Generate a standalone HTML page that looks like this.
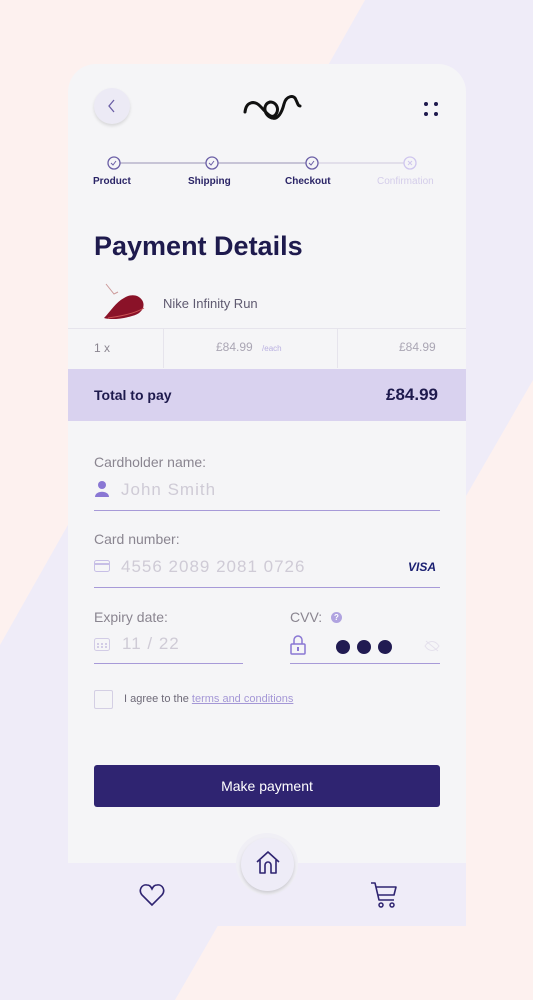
<!DOCTYPE html>
<html><head><meta charset="utf-8"><style>
*{margin:0;padding:0;box-sizing:border-box}
body{width:533px;height:1000px;position:relative;overflow:hidden;background:#fdf1ef;font-family:"Liberation Sans",sans-serif}
.bg{position:absolute;left:0;top:0}
.card{position:absolute;left:68px;top:64px;width:398px;height:862px;background:#f5f5f7;border-radius:28px 28px 0 0;overflow:hidden}
.t{position:absolute;white-space:nowrap}
.lbl{color:#8a8590;font-size:14px}
.ph{color:#cfcbd6;font-size:17px;letter-spacing:1px}
.line{position:absolute;height:1px;background:#a79ad8}
</style></head><body>
<svg class="bg" width="533" height="1000"><polygon points="365,0 533,0 533,380 175,1000 0,1000 0,645" fill="#efecf8"/></svg>
<div class="card">
 <div style="position:absolute;left:26px;top:24px;width:36px;height:36px;border-radius:50%;background:#eceaf5;box-shadow:0 2px 3px rgba(0,0,0,.12)"></div>
 <svg style="position:absolute;left:38px;top:33px" width="12" height="18"><path d="M8 3 L3 9 L8 15" stroke="#6b5fa6" stroke-width="1.3" fill="none"/></svg>
 <svg style="position:absolute;left:174px;top:26px" width="62" height="34"><path d="M3 22 C4 12 12 10 18 16 C24 22 28 28 32 26 C38 22 36 12 28 12 C20 14 22 26 30 28 C36 30 40 22 42 14 C44 6 52 4 54 10 C56 14 56 16 58 16" stroke="#111" stroke-width="3" fill="none" stroke-linecap="round"/></svg>
 <svg style="position:absolute;left:354px;top:36px" width="20" height="20" fill="#1e1a4d"><circle cx="4" cy="4" r="2"/><circle cx="14" cy="4" r="2"/><circle cx="4" cy="14" r="2"/><circle cx="14" cy="14" r="2"/></svg>
 <svg style="position:absolute;left:0;top:90px" width="398" height="20">
  <line x1="52" y1="9" x2="240" y2="9" stroke="#b8b3cc" stroke-width="1.5"/><line x1="250" y1="9" x2="336" y2="9" stroke="#dcd8e6" stroke-width="1.5"/>
  <g fill="#f5f5f7" stroke="#6b5fa6" stroke-width="1.3"><circle cx="46" cy="9" r="6"/><circle cx="144" cy="9" r="6"/><circle cx="244" cy="9" r="6"/></g>
  <circle cx="342" cy="9" r="6" fill="#f5f5f7" stroke="#cfc6ee" stroke-width="1.3"/>
  <g stroke="#6b5fa6" fill="none" stroke-width="1"><path d="M43 9l2 2 3-4"/><path d="M141 9l2 2 3-4"/><path d="M241 9l2 2 3-4"/></g>
  <path d="M340 7l4 4M344 7l-4 4" stroke="#cfc6ee"/>
 </svg>
 <div class="t" style="left:25px;top:112px;font-size:10px;font-weight:bold;color:#2a2466">Product</div>
 <div class="t" style="left:120px;top:112px;font-size:10px;font-weight:bold;color:#2a2466">Shipping</div>
 <div class="t" style="left:217px;top:112px;font-size:10px;font-weight:bold;color:#2a2466">Checkout</div>
 <div class="t" style="left:309px;top:112px;font-size:10px;color:#d4cdea">Confirmation</div>
 <div class="t" style="left:26px;top:167px;font-size:27px;font-weight:bold;color:#1e1a4d">Payment Details</div>
 <svg style="position:absolute;left:34px;top:218px" width="48" height="42"><path d="M4 2 L12 12 L16 10" stroke="#c99" fill="none"/><path d="M2 36 C8 30 14 20 22 16 C28 12 36 12 40 18 C44 24 40 32 30 34 C20 37 8 38 2 36Z" fill="#8a1228"/><path d="M6 36 C18 34 32 32 42 26" stroke="#c55" fill="none" stroke-width="1"/></svg>
 <div class="t" style="left:95px;top:232px;font-size:13px;color:#5f5a70">Nike Infinity Run</div>
 <div style="position:absolute;left:0;top:264px;width:398px;height:1px;background:#e6e4ec"></div>
 <div style="position:absolute;left:95px;top:264px;width:1px;height:40px;background:#e6e4ec"></div>
 <div style="position:absolute;left:269px;top:264px;width:1px;height:40px;background:#e6e4ec"></div>
 <div class="t" style="left:26px;top:277px;font-size:12px;color:#8a8590">1 x</div>
 <div class="t" style="left:148px;top:276px;font-size:12px;color:#aaa6b4">£84.99 <span style="font-size:8px;color:#b9b0e0;margin-left:6px">/each</span></div>
 <div class="t" style="left:331px;top:276px;font-size:12px;color:#aaa6b4">£84.99</div>
 <div style="position:absolute;left:0;top:305px;width:398px;height:52px;background:#d9d2ef"></div>
 <div class="t" style="left:26px;top:323px;font-size:14px;font-weight:bold;color:#1e1a4d">Total to pay</div>
 <div class="t" style="left:318px;top:321px;font-size:17px;font-weight:bold;color:#1e1a4d">£84.99</div>
 <div class="t lbl" style="left:26px;top:390px">Cardholder name:</div>
 <svg style="position:absolute;left:27px;top:417px" width="14" height="16" fill="#8a77d4"><circle cx="7" cy="4" r="4"/><path d="M0 16 C0 9 14 9 14 16Z"/></svg>
 <div class="t ph" style="left:53px;top:416px">John Smith</div>
 <div class="line" style="left:26px;top:446px;width:346px"></div>
 <div class="t lbl" style="left:26px;top:467px">Card number:</div>
 <svg style="position:absolute;left:26px;top:496px" width="16" height="12"><rect x="0.5" y="0.5" width="15" height="11" rx="2" fill="none" stroke="#c7bfe6"/><line x1="1" y1="4" x2="15" y2="4" stroke="#c7bfe6" stroke-width="2"/></svg>
 <div class="t ph" style="left:53px;top:493px">4556 2089 2081 0726</div>
 <div class="t" style="left:340px;top:496px;font-size:12px;font-weight:bold;font-style:italic;color:#1a1f71">VISA</div>
 <div class="line" style="left:26px;top:523px;width:346px"></div>
 <div class="t lbl" style="left:26px;top:545px">Expiry date:</div>
 <svg style="position:absolute;left:26px;top:572px" width="16" height="15"><rect x="0.5" y="2.5" width="15" height="12" rx="2" fill="none" stroke="#d2cce6"/><g fill="#d2cce6"><rect x="3" y="7" width="2" height="2"/><rect x="7" y="7" width="2" height="2"/><rect x="11" y="7" width="2" height="2"/><rect x="3" y="10" width="2" height="2"/><rect x="7" y="10" width="2" height="2"/><rect x="11" y="10" width="2" height="2"/></g></svg>
 <div class="t ph" style="left:54px;top:570px">11 / 22</div>
 <div class="line" style="left:26px;top:599px;width:149px"></div>
 <div class="t lbl" style="left:222px;top:545px">CVV:</div>
 <div style="position:absolute;left:263px;top:548px;width:11px;height:11px;border-radius:50%;background:#b0a3e0;color:#fff;font-size:8px;text-align:center;line-height:11px;font-weight:bold">?</div>
 <svg style="position:absolute;left:222px;top:571px" width="16" height="20"><path d="M4 9V5a4 4 0 0 1 8 0v4" fill="none" stroke="#8a77d4" stroke-width="1.5"/><rect x="1" y="9" width="14" height="10" rx="1" fill="none" stroke="#8a77d4" stroke-width="1.5"/><rect x="7" y="12" width="2" height="4" fill="#8a77d4"/></svg>
 <div style="position:absolute;left:268px;top:576px;width:14px;height:14px;border-radius:50%;background:#211b52"></div>
 <div style="position:absolute;left:289px;top:576px;width:14px;height:14px;border-radius:50%;background:#211b52"></div>
 <div style="position:absolute;left:310px;top:576px;width:14px;height:14px;border-radius:50%;background:#211b52"></div>
 <svg style="position:absolute;left:356px;top:576px" width="16" height="12"><path d="M1 6 C5 0 11 0 15 6 C11 12 5 12 1 6Z M2 1 L14 11" fill="none" stroke="#e4e0ec"/></svg>
 <div class="line" style="left:222px;top:599px;width:150px"></div>
 <div style="position:absolute;left:26px;top:626px;width:19px;height:19px;border:1px solid #d4cfe4;border-radius:2px"></div>
 <div class="t" style="left:56px;top:629px;font-size:11px;color:#6e6a78">I agree to the <span style="color:#a497d6;text-decoration:underline">terms and conditions</span></div>
 <div style="position:absolute;left:26px;top:701px;width:346px;height:42px;background:#2f2471;border-radius:3px;color:#fff;font-size:14px;text-align:center;line-height:42px">Make payment</div>
 <div style="position:absolute;left:0;top:799px;width:398px;height:63px;background:#efecf8"></div>
 <div style="position:absolute;left:168px;top:769px;width:62px;height:62px;border-radius:50%;background:#f0eff5"></div>
 <div style="position:absolute;left:173px;top:774px;width:53px;height:53px;border-radius:50%;background:#eeecf7;box-shadow:0 2px 3px rgba(0,0,0,.15)"></div>
 <svg style="position:absolute;left:187px;top:786px" width="26" height="26"><path d="M2 12 L13 2 L24 12 M5 10 V23 H10 V15 A3 3 0 0 1 16 15 V23 H21 V10" fill="none" stroke="#2f2471" stroke-width="1.6" stroke-linejoin="round"/></svg>
 <svg style="position:absolute;left:71px;top:819px" width="26" height="24"><path d="M13 22 L3 12 C-1 7 3 1 8 2 C11 2 12 4 13 6 C14 4 15 2 18 2 C23 1 27 7 23 12Z" fill="none" stroke="#2f2471" stroke-width="1.6"/></svg>
 <svg style="position:absolute;left:302px;top:817px" width="28" height="28"><path d="M1 2 H5 L9 19 H24 M6 6 H26 L24 14 H8" fill="none" stroke="#2f2471" stroke-width="1.6" stroke-linejoin="round"/><circle cx="11" cy="24" r="2" fill="none" stroke="#2f2471" stroke-width="1.5"/><circle cx="22" cy="24" r="2" fill="none" stroke="#2f2471" stroke-width="1.5"/></svg>
</div>
</body></html>
